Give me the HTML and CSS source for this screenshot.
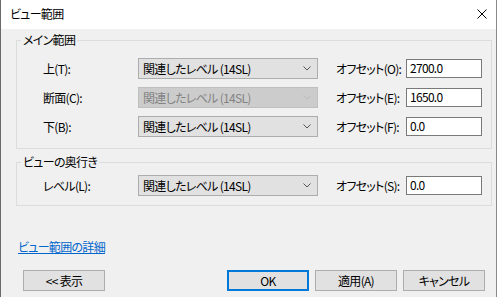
FILE: index.html
```html
<!DOCTYPE html>
<html lang="ja">
<head>
    <meta charset="UTF-8">
    <title>ビュー範囲</title>
    <link rel="stylesheet" href="styles.css">
</head>
<body>
    <div class="window">
        <div class="titlebar">
            <span class="title">ビュー範囲</span>
            <svg class="close" width="10" height="10" viewBox="0 0 10 10">
                <path d="M0.5 0.5 L9.5 9.5 M9.5 0.5 L0.5 9.5" stroke="#000" stroke-width="1" fill="none"/>
            </svg>
        </div>

        <div class="content">
            <div class="group main-range">
                <span class="caption">メイン範囲</span>
                <div class="row">
                    <span class="label">上(T):</span>
                    <div class="combo">
                        <span>関連したレベル (14SL)</span>
                        <svg class="chev" width="8" height="5" viewBox="0 0 8 5"><path d="M0.5 0.5 L4 4 L7.5 0.5" stroke="#555" fill="none"/></svg>
                    </div>
                    <span class="label">オフセット(O):</span>
                    <div class="field">2700.0</div>
                </div>
                <div class="row">
                    <span class="label">断面(C):</span>
                    <div class="combo disabled">
                        <span>関連したレベル (14SL)</span>
                        <svg class="chev" width="8" height="5" viewBox="0 0 8 5"><path d="M0.5 0.5 L4 4 L7.5 0.5" stroke="#bbb" fill="none"/></svg>
                    </div>
                    <span class="label">オフセット(E):</span>
                    <div class="field">1650.0</div>
                </div>
                <div class="row">
                    <span class="label">下(B):</span>
                    <div class="combo">
                        <span>関連したレベル (14SL)</span>
                        <svg class="chev" width="8" height="5" viewBox="0 0 8 5"><path d="M0.5 0.5 L4 4 L7.5 0.5" stroke="#555" fill="none"/></svg>
                    </div>
                    <span class="label">オフセット(F):</span>
                    <div class="field">0.0</div>
                </div>
            </div>

            <div class="group depth">
                <span class="caption">ビューの奥行き</span>
                <div class="row">
                    <span class="label">レベル(L):</span>
                    <div class="combo">
                        <span>関連したレベル (14SL)</span>
                        <svg class="chev" width="8" height="5" viewBox="0 0 8 5"><path d="M0.5 0.5 L4 4 L7.5 0.5" stroke="#555" fill="none"/></svg>
                    </div>
                    <span class="label">オフセット(S):</span>
                    <div class="field">0.0</div>
                </div>
            </div>

            <a class="details" href="#">ビュー範囲の詳細</a>

            <div class="buttons">
                <button class="btn">&lt;&lt; 表示</button>
                <div class="spacer"></div>
                <button class="btn default">OK</button>
                <button class="btn">適用(A)</button>
                <button class="btn">キャンセル</button>
            </div>
        </div>
    </div>
</body>
</html>
```

FILE: styles.css
```css
html, body {
    margin: 0;
    padding: 0;
}
body {
    width: 497px;
    height: 297px;
    background: #f0f0f0;
    font-family: "Noto Sans CJK JP", "Noto Sans", sans-serif;
    font-size: 12px;
    font-feature-settings: "palt";
    letter-spacing: -0.7px;
    color: #000;
    overflow: hidden;
}
.window {
    box-sizing: border-box;
    width: 497px;
    height: 297px;
    border-left: 1px solid #6a6a6a;
    border-right: 1px solid #8a8a8a;
    display: flex;
    flex-direction: column;
}
.titlebar {
    height: 29px;
    background: #fff;
    display: flex;
    align-items: center;
    padding-left: 9px;
    padding-right: 9px;
}
.title {
    flex: 1;
    line-height: 16px;
    margin-top: -1px;
}
.close {
    margin-top: -1px;
}
.content {
    padding: 11px 4px 0 15px;
    display: flex;
    flex-direction: column;
}
.group {
    position: relative;
    box-sizing: border-box;
    width: 476px;
    border: 1px solid #dcdcdc;
    padding-left: 26px;
    display: flex;
    flex-direction: column;
    gap: 8px;
}
.main-range {
    height: 109px;
    padding-top: 17px;
}
.depth {
    height: 44px;
    margin-top: 13px;
    padding-top: 12px;
}
.caption {
    position: absolute;
    top: -9px;
    left: 4px;
    padding: 0 2px;
    background: #f0f0f0;
    line-height: 16px;
}
.row {
    display: grid;
    grid-template-columns: 95px 180px 18px 70px 76px;
    align-items: center;
    height: 21px;
}
.row .label:first-child { grid-column: 1; }
.row .combo { grid-column: 2; }
.row .label:nth-child(3) { grid-column: 4; }
.row .field { grid-column: 5; }
.label {
    line-height: 16px;
    white-space: nowrap;
}
.combo {
    box-sizing: border-box;
    height: 21px;
    background: #e1e1e1;
    border: 1px solid #adadad;
    display: flex;
    align-items: center;
    justify-content: space-between;
    padding: 0 6px 0 4px;
    line-height: 16px;
    white-space: nowrap;
}
.combo.disabled {
    background: #cccccc;
    border-color: #bfbfbf;
    color: #838383;
}
.field {
    box-sizing: border-box;
    height: 19px;
    background: #fff;
    border: 1px solid #7a7a7a;
    padding-left: 3px;
    line-height: 16px;
}
.details {
    margin-top: 33px;
    margin-left: 2px;
    align-self: flex-start;
    color: #0066cc;
    text-decoration: underline;
    line-height: 16px;
}
.buttons {
    display: flex;
    margin-top: 15px;
    margin-left: 7px;
}
.spacer {
    flex: 0 0 116px;
}
.btn {
    box-sizing: border-box;
    width: 82px;
    height: 21px;
    margin: 0 6px 0 0;
    padding: 0;
    background: #e1e1e1;
    border: 1px solid #adadad;
    font-family: "Noto Sans CJK JP", "Noto Sans", sans-serif;
    font-size: 12px;
    font-feature-settings: "palt";
    letter-spacing: -0.7px;
    color: #000;
    line-height: 16px;
}
.btn.default {
    border: 2px solid #0078d7;
}
```
